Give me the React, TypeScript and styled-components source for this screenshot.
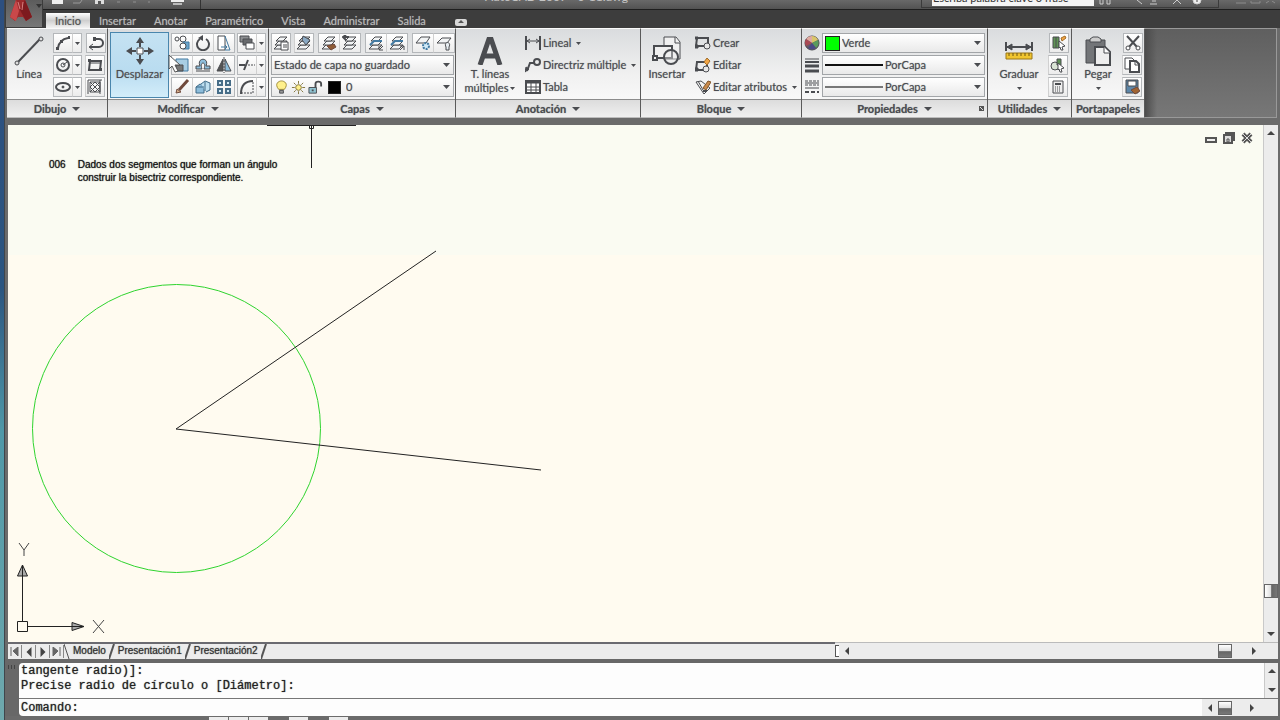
import React from "react";
import styled, { createGlobalStyle } from "styled-components";

const ink = "#4a4c50";
const uiFont = 'Lato, "Open Sans", "Noto Sans", sans-serif';

const GlobalStyle = createGlobalStyle`
  * { box-sizing: border-box; }
  body { margin: 0; background: #6a6a6a; font-family: ${uiFont}; font-size: 11px; color: ${ink}; overflow: hidden; }
  button, select, input { font: inherit; color: inherit; margin: 0; text-shadow: inherit; }
  svg { display: block; flex: none; }
`;

const Screen = styled.div`
  display: flex;
  height: 100vh;
  background: linear-gradient(#2d4f80, #2b5580 40%, #4f98a8 60%, #6fa9ad);
`;
const AppWindow = styled.div`
  flex: 1;
  min-width: 0;
  display: flex;
  flex-direction: column;
  margin-left: 4px;
  border-left: 1px solid #40464c;
  background: #6b6b6b;
  position: relative;
`;

/* ---------- title bar and tabs ---------- */
const TitleBar = styled.header`
  height: 10px;
  flex: none;
  display: flex;
  align-items: flex-end;
  overflow: hidden;
  padding-left: 46px;
  background: linear-gradient(#696969, #525252);
  border-bottom: 1px solid #1e1e1e;
`;
const QuickAccess = styled.div`
  display: flex;
  align-items: flex-end;
  width: 150px;
  height: 9px;
  border-right: 1px solid #333;
`;
const TitleText = styled.h1`
  flex: 1;
  margin: 0 0 5px;
  padding-left: 284px;
  font-size: 12px;
  line-height: 14px;
  font-weight: 400;
  color: #c4c4c4;
  white-space: nowrap;
`;
const SearchGroup = styled.div`
  display: flex;
  align-items: flex-end;
  width: 298px;
  height: 20px;
  margin-bottom: 1px;
  padding: 0 0 1px 10px;
  gap: 3px;
  border: 1px solid #3b3b3b;
`;
const SearchInput = styled.input`
  width: 162px;
  height: 18px;
  padding: 0 2px 0 1px;
  border: 0;
  border-radius: 0;
  background: #f4f4f4;
  line-height: 16px;
  &::placeholder { color: #333; opacity: 1; }
`;
const WindowGlyphs = styled.div`
  width: 61px;
  padding: 0 0 4px 17px;
`;
const TabBar = styled.nav`
  height: 18px;
  flex: none;
  display: flex;
  align-items: flex-end;
  padding-left: 41px;
  background: #3d3d3d;
`;
const Tab = styled.button<{ $active?: boolean }>`
  height: 15px;
  padding: 0 9px;
  border: 0;
  line-height: 14px;
  color: ${(p) => (p.$active ? "#555" : "#b9b9b9")};
  text-shadow: 0 0 1px #888;
  background: ${(p) => (p.$active ? "linear-gradient(#fff, #cfcfcf 50%, #f3f3f3)" : "transparent")};
`;
const TabToggle = styled.button`
  height: 12px;
  padding: 0 0 0 20px;
  border: 0;
  background: none;
`;
const AppMenu = styled.button`
  position: absolute;
  left: 0;
  top: 0;
  width: 38px;
  height: 28px;
  padding: 0 0 0 3px;
  display: flex;
  gap: 2px;
  border: 1px solid #3c3c3c;
  border-top: 0;
  background: linear-gradient(#5c5c5c, #777);
`;

/* ---------- ribbon ---------- */
const Ribbon = styled.div`
  flex: none;
  display: flex;
  height: 97px;
  padding-left: 2px;
  background: #6b6b6b;
  text-shadow: 0 0 1px #8a8c90;
`;
const RibbonRest = styled.div`
  flex: 1;
  height: 90px;
  margin-right: 3px;
  border: 1px solid #999;
  border-left: 0;
  background: linear-gradient(90deg, #4c4c4c, transparent 12px), linear-gradient(#5f5f5f, #777);
`;
const PanelBox = styled.section<{ $w: number }>`
  flex: none;
  width: ${(p) => p.$w}px;
  height: 90px;
  display: flex;
  flex-direction: column;
  border-top: 1px solid #fafafa;
  border-right: 1px solid #5a5a5a;
  border-bottom: 1px solid #bdbdbd;
  background: linear-gradient(#dadcde, #f0f0f0 50%, #fdfdfd);
`;
const PanelBody = styled.div<{ $left?: number; $gap?: number }>`
  flex: 1;
  display: flex;
  gap: ${(p) => p.$gap ?? 3}px;
  padding: 4px 0 0 ${(p) => p.$left ?? 2}px;
`;
const PanelTitle = styled.h2`
  position: relative;
  height: 18px;
  margin: 0;
  display: flex;
  align-items: center;
  justify-content: center;
  gap: 6px;
  border-top: 1px solid #8b8b8b;
  background: linear-gradient(#dcdcdc, #f0f0f0);
  font-size: 11px;
  line-height: 16px;
  font-weight: 700;
  white-space: nowrap;
`;
const Launcher = styled.span`
  position: absolute;
  right: 3px;
  top: 6px;
`;
const Rows = styled.div`
  display: flex;
  flex-direction: column;
  gap: 2px;
  flex: none;
`;
const Row = styled.div<{ $gap?: number }>`
  display: flex;
  align-items: center;
  height: 20px;
  gap: ${(p) => p.$gap ?? 0}px;
`;
const BigButton = styled.button<{ $w: number; $active?: boolean }>`
  flex: none;
  width: ${(p) => p.$w}px;
  height: 66px;
  margin-top: -1px;
  padding: 2px 0 0;
  display: flex;
  flex-direction: column;
  align-items: center;
  border: 1px solid ${(p) => (p.$active ? "#4a86ad" : "transparent")};
  background: ${(p) => (p.$active ? "linear-gradient(#c5e2f2, #b9dcf0 60%, #d3edfa)" : "none")};
  line-height: 14px;
  white-space: nowrap;
`;
const BigIcon = styled.span`
  height: 32px;
  display: flex;
  align-items: center;
`;
const BigLabel = styled.span`
  display: flex;
  align-items: center;
  gap: 2px;
  height: 14px;
`;
const IconButton = styled.button<{ $w?: number }>`
  width: ${(p) => p.$w ?? 20}px;
  height: 20px;
  flex: none;
  padding: 0;
  display: flex;
  align-items: center;
  justify-content: center;
  border: 1px solid #b4b7ba;
  background: linear-gradient(#fff, #ececec);
  & + & { border-left-color: #d0d0d0; margin-left: -1px; }
`;
const TextButton = styled.button`
  height: 20px;
  padding: 0;
  display: flex;
  align-items: center;
  gap: 2px;
  border: 0;
  background: none;
  line-height: 14px;
  white-space: nowrap;
`;
const CommandLabel = styled.span`
  padding: 0 3px 1px 0;
`;
const Combo = styled.label<{ $w: number }>`
  position: relative;
  width: ${(p) => p.$w}px;
  height: 20px;
  display: flex;
  align-items: center;
  gap: 2px;
  padding-left: 2px;
  border: 1px solid #a2a5a8;
  background: linear-gradient(#fff, #e9e9e9);
`;
const Select = styled.select`
  flex: 1;
  min-width: 0;
  height: 18px;
  padding: 0 0 2px;
  appearance: none;
  border: 0;
  background: transparent;
`;
const ComboArrow = styled.span`
  position: absolute;
  right: 3px;
  top: 7px;
  pointer-events: none;
`;
const Swatch = styled.span<{ $color: string; $size: number }>`
  width: ${(p) => p.$size}px;
  height: ${(p) => p.$size}px;
  flex: none;
  background: ${(p) => p.$color};
  border: 1px solid #222;
`;
const LineSample = styled.span<{ $color: string }>`
  width: 58px;
  height: 2px;
  flex: none;
  background: ${(p) => p.$color};
`;

/* ---------- drawing area ---------- */
const DrawingRow = styled.main`
  flex: 1;
  min-height: 0;
  display: flex;
  margin: 0 2px 0 3px;
`;
const Canvas = styled.div`
  position: relative;
  flex: 1;
  min-width: 0;
  overflow: hidden;
  background: linear-gradient(#fafbf2 130px, #fffbf0 130px);
`;
const Note = styled.p`
  position: absolute;
  left: 41px;
  top: 33px;
  margin: 0;
  display: flex;
  gap: 12px;
  font-family: "Liberation Sans", Arial, sans-serif;
  font-size: 10px;
  line-height: 13px;
  color: #111;
  text-shadow: 0 0 1px #444;
`;
const DocButtons = styled.div`
  position: absolute;
  right: 9px;
  top: 7px;
  display: flex;
  gap: 4px;
`;
const GlyphButton = styled.button`
  width: 14px;
  height: 12px;
  padding: 0;
  border: 0;
  background: none;
`;
const VScroll = styled.div<{ $w: number }>`
  width: ${(p) => p.$w}px;
  flex: none;
  display: flex;
  flex-direction: column;
  align-items: center;
  justify-content: space-between;
  padding: 4px 0;
  border-left: 1px solid #c9c9c9;
  background: #ececec;
`;
const Spacer = styled.span<{ $w?: number }>`
  flex: ${(p) => (p.$w ? `0 0 ${p.$w}px` : "1")};
`;
const Thumb = styled.span<{ $vertical?: boolean }>`
  width: 14px;
  height: 14px;
  flex: none;
  border: 1px solid #666;
  background: linear-gradient(${(p) => (p.$vertical ? "90deg" : "180deg")}, #fff, #ddd 50%, #666 55%, #777);
`;
const ThumbGap = styled.span`
  height: 32px;
`;
const LayoutBar = styled.div`
  flex: none;
  display: flex;
  align-items: stretch;
  height: 17px;
  margin: 0 2px 0 3px;
  background: #ececec;
`;
const LayoutTabs = styled.div`
  width: 827px;
  display: flex;
  align-items: center;
  border-top: 2px solid #6a6a70;
`;
const NavButton = styled.button`
  width: 14px;
  height: 13px;
  padding: 0;
  display: flex;
  align-items: center;
  justify-content: center;
  border: 0;
  border-right: 1px solid #888;
  background: none;
`;
const LayoutTab = styled.button`
  height: 15px;
  padding: 0 3px 1px;
  border: 0;
  background: none;
  font-family: "Liberation Sans", Arial, sans-serif;
  font-size: 10px;
  line-height: 14px;
  color: #333;
  text-shadow: 0 0 1px #555;
`;
const HScroll = styled.div`
  flex: 1;
  display: flex;
  align-items: center;
  padding-right: 20px;
  border-top: 1px solid #bbb;
`;
const SplitHandle = styled.span`
  width: 4px;
  height: 12px;
  margin-right: 4px;
  border: 1px solid #555;
  border-right: 0;
  background: #fff;
`;

/* ---------- command window ---------- */
const CommandDock = styled.section`
  flex: none;
  height: 57px;
  display: flex;
  padding: 4px 2px 0 14px;
  position: relative;
  background: #686868;
`;
const Grip = styled.span`
  position: absolute;
  left: 3px;
  top: 6px;
  width: 9px;
  height: 4px;
  background: repeating-linear-gradient(90deg, #444 0 1px, transparent 1px 3px);
`;
const CommandArea = styled.div`
  flex: 1;
  display: flex;
  flex-direction: column;
  border-radius: 4px 0 0 4px;
  overflow: hidden;
  background: #fdfdfd;
  font-family: "Liberation Mono", "Courier New", monospace;
  font-size: 12px;
  line-height: 15px;
  color: #222;
  text-shadow: 0 0 1px #555;
`;
const History = styled.div`
  height: 36px;
  flex: none;
  display: flex;
  border-bottom: 1px solid #777;
`;
const HistoryText = styled.div`
  flex: 1;
  padding: 1px 0 0 2px;
  white-space: pre;
`;
const Prompt = styled.label`
  flex: 1;
  display: flex;
  align-items: center;
`;
const PromptText = styled.span`
  padding: 2px 0 0 2px;
`;
const PromptInput = styled.input`
  flex: 1;
  height: 15px;
  border: 0;
  padding: 0 4px;
  outline: 0;
  background: transparent;
`;
const PromptScroll = styled.span`
  align-self: stretch;
  width: 76px;
  display: flex;
  align-items: center;
  gap: 4px;
  padding-left: 4px;
  background: #ececec;
`;
const StatusBar = styled.footer`
  height: 4px;
  flex: none;
  display: flex;
  gap: 1px;
  align-items: flex-end;
  padding-left: 204px;
  background: #6b6b6b;
`;
const StatusToggle = styled.button<{ $on: boolean }>`
  width: 19px;
  height: 3px;
  padding: 0;
  border: 0;
  background: ${(p) => (p.$on ? "#ececec" : "transparent")};
`;

/* ---------- icons ---------- */
const Caret = ({ w = 7 }: { w?: number }) => (
  <svg width={w} height={w > 6 ? 4 : 3} viewBox="0 0 8 4" preserveAspectRatio="none" aria-hidden="true">
    <path d="M0 0h8L4 4z" fill={ink} />
  </svg>
);
const Arrow = ({ dir, size = 8 }: { dir: "up" | "down" | "left" | "right"; size?: number }) => (
  <svg width={size} height={size} viewBox="0 0 8 8" aria-hidden="true">
    <path fill="#444" d={{ up: "M0 6h8L4 2z", down: "M0 2h8L4 6z", left: "M6 0v8L2 4z", right: "M2 0v8l4-4z" }[dir]} />
  </svg>
);

const sheets = (
  <g fill="#f2f4f5" stroke={ink}>
    <path d="M1 14l4-4h9l-4 4z" />
    <path d="M2 10l4-4h8l-4 4z" />
    <path d="M3 6l4-4h7l-4 4z" />
  </g>
);
const art: Record<string, React.ReactNode> = {
  arc: <><path d="M3 13C4 7 7 4 13 3" strokeWidth="2" /><path d="M1 12h3v3H1zM5 5h3v3H5zM13 1h2v3h-2z" fill={ink} stroke="none" /></>,
  hook: <><path d="M7 4h4a4 4 0 0 1 0 8H2" strokeWidth="2" /><path d="M5 9L1 12l4 3" /><path d="M5 2h3v4H5z" fill={ink} stroke="none" /></>,
  circle: <><circle cx="8" cy="8" r="6" strokeWidth="2" /><circle cx="8" cy="8" r="2" /><path d="M8 8l4-3" /></>,
  rect: <><path d="M3 4h11l-1 9H2z" strokeWidth="2" /><path d="M1 2h3v3H1zM12 11h3v3h-3z" fill={ink} stroke="none" /><path d="M3 6h11" /></>,
  ellipse: <><ellipse cx="8" cy="8" rx="7" ry="4" strokeWidth="2" /><circle cx="8" cy="8" r="1" fill={ink} /></>,
  hatch: <><path d="M3 3h10v10H3zM3 8l5-5M3 13L13 3M8 13l5-5M3 3l10 10M8 3l5 5M3 8l5 5" /><path d="M1 1v14M1 1h14M13 1v14" /></>,
  copy: <><circle cx="3" cy="4" r="2" /><circle cx="9" cy="4" r="3" /><path d="M9 7h6v7H9z" fill="#6aa5cc" stroke="#427aa2" /><circle cx="9" cy="11" r="3" fill="#fff" /></>,
  rotate: <><path d="M5 4a6 6 0 1 0 6 0" strokeWidth="2" /><path d="M8 0v6L3 3z" fill={ink} stroke="none" /></>,
  stretch: <><path d="M2 1h7v14H2z" fill="#fff" /><path d="M9 1l5 14H9M5 12h6M9 10l2 2-2 2" stroke="#427aa2" /></>,
  front: <><path d="M1 1h9v6H1z" fill="#8b8d90" /><path d="M4 4h9v6H4z" fill="#696b6e" /><path d="M7 8h8v6H7z" fill="#fff" /></>,
  scale: <><path d="M2 2h12v12H2z" fill="#a9cee4" stroke="#427aa2" /><path d="M2 8h7v6H2z" fill="#777" /></>,
  offset: <><path d="M1 12V9h4C1 0 15 0 11 9h4v3H9c3-8-5-8-2 0z" fill="#8dbddb" /><path d="M1 14h14" /></>,
  mirror: <><path d="M7 2v12H1z" fill="#555" /><path d="M9 2v12h6z" fill="#8dbddb" /><path d="M8 0v16" strokeDasharray="2 1" /></>,
  trim: <><path d="M0 8h6M9 3L5 13" strokeWidth="2" /><path d="M9 8h7" strokeDasharray="2 1" /></>,
  erase: <><path d="M14 1L5 11" stroke="#704a3c" strokeWidth="3" /><path d="M2 14l1-4 4 3z" fill="#d8b08c" stroke="#704a3c" /></>,
  explode: <><path d="M1 8l4-3 4 2v7H1z" fill="#8dbddb" stroke="#3e6b88" /><path d="M6 5l4-3 5 2v7l-4 2" fill="#bfe0f1" stroke="#3e6b88" /><path d="M1 8h8M10 3v9" stroke="#3e6b88" /></>,
  array: <path d="M2 2h4v4H2zM10 2h4v4h-4zM2 10h4v4H2zM10 10h4v4h-4z" fill="#d4ebf7" stroke="#476d88" strokeWidth="2" />,
  fillet: <><path d="M2 15C2 6 6 2 14 2" strokeWidth="2" /><path d="M2 14h12V2" strokeDasharray="2 1" /></>,
  layers: <>{sheets}<path d="M8 7h7v8H8z" fill="#fff" /><path d="M10 10h4M10 12h4" /></>,
  layersState: <>{sheets}<path d="M7 1l7 4-4 5-4-5z" fill="#8aa9c4" /></>,
  layersMatch: <>{sheets}<path d="M6 11l7-2 2 3-5 3z" fill="#8f5b36" stroke="#704a3c" /></>,
  layersPrev: <>{sheets}<path d="M7 2H1M4 0L1 2l3 3" strokeWidth="2" /></>,
  layersIso: <>{sheets}<path d="M2 10l4-4h8" stroke="#427aa2" strokeWidth="2" /><path d="M15 11l-4 4M11 11v4h4" /></>,
  layersUn: <>{sheets}<path d="M2 10l4-4h8" stroke="#427aa2" strokeWidth="2" /><path d="M11 15l4-4M11 11h4v4" /></>,
  layersFreeze: <><path d="M1 8l5-6h9l-4 6z" fill="#f2f4f5" /><circle cx="11" cy="11" r="3" fill="#cfe9f7" stroke="#427aa2" strokeWidth="2" strokeDasharray="2 1" /></>,
  layersOff: <><path d="M1 8l5-5h9l-4 5z" fill="#f2f4f5" /><path d="M10 12c-3-6 6-6 3 0v3h-3z" fill="#e8eef2" /></>,
  bulb: <><path d="M5 10C0 4 5 1 8 1s8 3 3 9z" fill="#fff08c" stroke="#9d8a35" /><path d="M6 11h4v3H6z" fill="#999" /></>,
  sun: <><circle cx="8" cy="8" r="3" fill="#fff08c" stroke="#807238" /><path d="M8 1v3M8 12v3M1 8h3M12 8h3M3 3l2 2M11 11l2 2M13 3l-2 2M5 11l-2 2" stroke="#807238" /></>,
  lock: <><path d="M1 8h8v6H1z" fill="#8fc3d1" /><path d="M8 8V4c0-3 6-3 6 0v3M5 10v2" strokeWidth="2" /></>,
  lineal: <><path d="M1 1v14M15 1v14" strokeWidth="2" /><path d="M2 6h12M5 4L2 6l3 2M11 4l3 2-3 2" /></>,
  leader: <><path d="M2 14L5 6h4" strokeWidth="2" /><path d="M0 15l1-5 3 2z" fill={ink} /><circle cx="12" cy="5" r="3" strokeWidth="2" /></>,
  table: <><path d="M1 2h14v12H1z" fill="#fff" strokeWidth="2" /><path d="M1 3h14" strokeWidth="3" /><path d="M1 8h14M1 11h14M6 4v10M11 4v10" /></>,
  create: <><path d="M2 3h11v8H1z" strokeWidth="2" /><circle cx="12" cy="11" r="3" fill="#e7e7e7" /><path d="M0 10h3v3H0zM0 2h3v2H0z" fill={ink} /></>,
  edit: <><path d="M2 5h10v8H1z" strokeWidth="2" /><circle cx="11" cy="12" r="3" fill="#e7e7e7" /><path d="M9 5l3-4 3 3-3 4z" fill="#f2a545" stroke="#a16d28" /><path d="M0 11h3v3H0z" fill={ink} /></>,
  attrs: <><path d="M1 3l5-1 9 7-6 6zM3 2l5 9" /><path d="M8 9l5-7 3 1-5 8z" fill="#c98a4c" stroke="#80562a" /><path d="M8 12h4" strokeWidth="2" /></>,
  sphere: <><circle cx="8" cy="8" r="7" fill="#6b5a66" /><path d="M8 8L2 4a7 7 0 0 1 6-3z" fill="#dfaaa0" stroke="none" /><path d="M8 8V1a7 7 0 0 1 6 4z" fill="#d9c56a" stroke="none" /><path d="M8 8l6-3a7 7 0 0 1-2 8z" fill="#5a9a5d" stroke="none" /><path d="M8 8l-6 3a7 7 0 0 1 0-7z" fill="#a94a55" stroke="none" /><path d="M8 8l4 5a7 7 0 0 1-8 0z" fill="#4b4a86" stroke="none" /></>,
  weights: <><path d="M1 2h14" /><path d="M1 5h14" strokeWidth="2" /><path d="M1 9h14M1 14h14" strokeWidth="3" /></>,
  types: <><path d="M1 2h14M1 6h14" strokeDasharray="3 1" /><path d="M1 4h14M1 9h14" /><path d="M1 13h14" strokeDasharray="4 2" strokeWidth="2" /></>,
  quick: <><path d="M2 2h6v11H2z" fill="#5f9355" /><path d="M5 2v11" /><path d="M10 3l4-2 1 2-4 3z" fill="#f2a545" stroke="#a16d28" /><path d="M8 6l6 5-3 1 1 3-2 0-1-3-1 1z" fill="#fff" /></>,
  selectAll: <><circle cx="5" cy="9" r="4" fill="#d9e4d5" /><path d="M7 2h4v6H7z" fill="#5f9355" /><path d="M8 6l6 5-3 1 1 3-2 0-1-3-1 1z" fill="#fff" /></>,
  calc: <><path d="M3 2h10v12H3z" fill="#eee" /><path d="M5 5h6" strokeWidth="2" /><path d="M5 8h6M5 10h6M5 12h6" strokeDasharray="1 1" /></>,
  cut: <><path d="M2 1l10 11M14 1L4 12" strokeWidth="2" /><circle cx="3" cy="13" r="2" fill="#fff" /><circle cx="13" cy="13" r="2" fill="#fff" /></>,
  copyClip: <><path d="M1 1h7l2 2v9H1z" fill="#fff" /><path d="M6 4h6l3 3v8H6z" fill="#fff" strokeWidth="2" /><path d="M11 4v4h4" /></>,
  match: <><path d="M2 1h12v13H2z" fill="#5c86a8" /><path d="M4 2h8v5H4z" fill="#fff" /><path d="M7 11l6-3 3 4-5 3z" fill="#a06432" stroke="#704a3c" /></>,
};
const Icon = ({ name, size = 16 }: { name: string; size?: number }) => (
  <svg width={size} height={size} viewBox="0 0 16 16" fill="none" stroke={ink} aria-hidden="true">
    {art[name]}
  </svg>
);

const PointerMark = styled.svg`
  position: absolute;
  left: 163px;
  top: 54px;
  pointer-events: none;
`;

const Tool = ({ name, label, w }: { name: string; label: string; w?: number }) => (
  <IconButton $w={w} aria-label={label}><Icon name={name} /></IconButton>
);
const SplitTool = ({ name, label }: { name: string; label: string }) => (
  <Row>
    <Tool name={name} label={label} />
    <IconButton $w={10} aria-label={label + ": opciones"}><Caret w={5} /></IconButton>
  </Row>
);
const Command = ({ name, label, menu }: { name: string; label: string; menu?: boolean }) => (
  <TextButton>
    <Icon name={name} size={16} />
    <CommandLabel>{label}</CommandLabel>
    {menu && <Caret w={5} />}
  </TextButton>
);
const Panel = (p: { title: string; w: number; left?: number; gap?: number; plain?: boolean; launcher?: boolean; children: React.ReactNode }) => (
  <PanelBox $w={p.w}>
    <PanelBody $left={p.left} $gap={p.gap}>{p.children}</PanelBody>
    <PanelTitle>
      {p.title}
      {!p.plain && <Caret w={8} />}
      {p.launcher && (
        <Launcher><svg width="5" height="5" viewBox="0 0 5 5"><path d="M0 0h5v5H0z" fill="#555" /><path d="M1 1l3 3" stroke="#ddd" /></svg></Launcher>
      )}
    </PanelTitle>
  </PanelBox>
);

const tabs = ["Inicio", "Insertar", "Anotar", "Paramétrico", "Vista", "Administrar", "Salida"];
const statusToggles = [true, true, true, false, true, false, true];

export default function App() {
  return (
    <>
      <GlobalStyle />
      <Screen>
        <AppWindow>
          <TitleBar>
            <QuickAccess>
              <svg width="148" height="9" viewBox="0 0 148 9" aria-hidden="true">
                <path d="M1 0h11v4H1z" fill="#eee" />
                <path d="M22 3h7l2-3" stroke="#999" fill="none" />
                <path d="M44 0h9v4h-9z" fill="#ddd" />
                <path d="M47 1h3v3h-3z" fill="#555" />
                <path d="M66 2h3M82 2h3M97 2h2" stroke="#909090" />
                <path d="M120 0h13v2h-13z" fill="#eee" />
                <path d="M122 3h9v2h-9z" fill="#bbb" />
              </svg>
            </QuickAccess>
            <TitleText>AutoCAD 2009 - 0-11.dwg</TitleText>
            <SearchGroup>
              <SearchInput aria-label="Buscar" placeholder="Escriba palabra clave o frase" />
              <svg width="112" height="6" viewBox="0 0 112 6" fill="none" stroke="#ccc" aria-hidden="true">
                <path d="M3 0v4h3V0M10 0v4h3V0M40 0l5 4M53 4h7M55 1h4M76 4l4-4 4 4" />
                <circle cx="100" cy="0" r="4" fill="#eee" />
                <path d="M100 0v2" stroke="#444" />
              </svg>
            </SearchGroup>
            <WindowGlyphs>
              <svg width="40" height="4" viewBox="0 0 40 4" stroke="#8c8c8c" fill="none" aria-hidden="true"><path d="M0 2h10M15 0v2h9V0M30 2l3-2M39 2l-3-2" /></svg>
            </WindowGlyphs>
          </TitleBar>
          <TabBar>
            {tabs.map((t, i) => <Tab key={t} $active={i === 0}>{t}</Tab>)}
            <TabToggle aria-label="Minimizar cinta de opciones">
              <svg width="12" height="7" viewBox="0 0 12 7"><rect width="12" height="7" rx="2" fill="#d8d8d8" /><path d="M3 4l3-3 3 3zM4 5h4" fill="#555" /></svg>
            </TabToggle>
          </TabBar>
          <AppMenu aria-label="Menú de la aplicación">
            <svg width="24" height="22" viewBox="0 0 24 22">
              <path d="M1 17L7 0h9l7 17-6 4-3-4h-5l-3 4z" fill="#9c2a2c" />
              <path d="M7 0l3 11-3 10-6-4z" fill="#c9484a" />
              <path d="M16 0l-5 10 6 11 6-4z" fill="#7d1a1e" />
              <path d="M9 2l2 7M14 2l-1 8" stroke="#d98080" />
            </svg>
            <svg width="7" height="10" viewBox="0 0 7 10"><path d="M1 4h6L4 8z" fill="#333" /></svg>
          </AppMenu>

          <Ribbon>
            <Panel title="Dibujo" w={101} gap={4}>
              <BigButton $w={40}>
                <BigIcon>
                  <svg width="30" height="30" viewBox="0 0 30 30" stroke={ink} fill="#ddd"><path d="M4 26L26 3" strokeWidth="2" /><circle cx="3" cy="27" r="2" /><circle cx="27" cy="3" r="2" /></svg>
                </BigIcon>
                <BigLabel>Línea</BigLabel>
              </BigButton>
              <Rows>
                <SplitTool name="arc" label="Arco" />
                <SplitTool name="circle" label="Círculo" />
                <SplitTool name="ellipse" label="Elipse" />
              </Rows>
              <Rows>
                <Tool name="hook" label="Polilínea" />
                <Tool name="rect" label="Rectángulo" />
                <Tool name="hatch" label="Sombreado" />
              </Rows>
            </Panel>

            <Panel title="Modificar" w={161} gap={2}>
              <BigButton $w={59} $active>
                <BigIcon>
                  <svg width="28" height="28" viewBox="0 0 28 28" fill={ink}>
                    <path d="M14 0l4 6h-3v4h-2V6h-3zM14 28l4-6h-3v-4h-2v4h-3zM0 14l6-4v3h4v2H6v3zM28 14l-6-4v3h-4v2h4v3z" />
                    <path d="M11 11h6v6h-6z" fill="#fff" stroke={ink} />
                  </svg>
                </BigIcon>
                <BigLabel>Desplazar</BigLabel>
              </BigButton>
              <Rows>
                <Row><Tool w={22} name="copy" label="Copiar" /><Tool w={22} name="rotate" label="Girar" /><Tool w={22} name="stretch" label="Estirar" /></Row>
                <Row><Tool w={22} name="scale" label="Escala" /><Tool w={22} name="offset" label="Desfase" /><Tool w={22} name="mirror" label="Simetría" /></Row>
                <Row><Tool w={22} name="erase" label="Borrar" /><Tool w={22} name="explode" label="Descomponer" /><Tool w={22} name="array" label="Matriz" /></Row>
              </Rows>
              <Rows>
                <SplitTool name="front" label="Traer al frente" />
                <SplitTool name="trim" label="Recortar" />
                <SplitTool name="fillet" label="Empalme" />
              </Rows>
            </Panel>

            <Panel title="Capas" w={187}>
              <Rows>
                <Row $gap={4}>
                  <Tool name="layers" label="Propiedades de capas" />
                  <Tool name="layersState" label="Establecer actual" />
                  <Row><Tool w={22} name="layersMatch" label="Igualar" /><Tool w={22} name="layersPrev" label="Previa" /></Row>
                  <Row><Tool w={22} name="layersIso" label="Aislar" /><Tool w={22} name="layersUn" label="Desaislar" /></Row>
                  <Row><Tool w={22} name="layersFreeze" label="Inutilizar" /><Tool w={22} name="layersOff" label="Desactivar" /></Row>
                </Row>
                <Combo $w={183}>
                  <Select aria-label="Estado de capa"><option>Estado de capa no guardado</option></Select>
                  <ComboArrow><Caret /></ComboArrow>
                </Combo>
                <Combo $w={183}>
                  <Icon name="bulb" size={15} /><Icon name="sun" size={15} /><Icon name="lock" size={15} />
                  <Spacer $w={1} />
                  <Swatch $color="#000" $size={13} />
                  <Spacer $w={1} />
                  <Select aria-label="Capa"><option>0</option></Select>
                  <ComboArrow><Caret /></ComboArrow>
                </Combo>
              </Rows>
            </Panel>

            <Panel title="Anotación" w={185}>
              <BigButton $w={64}>
                <BigIcon>
                  <svg width="26" height="28" viewBox="0 0 26 28" fill="none" stroke={ink} strokeWidth="5"><path d="M3 28L12 2h2l9 26M6 19h14" /></svg>
                </BigIcon>
                <BigLabel>T. líneas</BigLabel>
                <BigLabel>múltiples <Caret w={5} /></BigLabel>
              </BigButton>
              <Rows>
                <Command name="lineal" label="Lineal" menu />
                <Command name="leader" label="Directriz múltiple" menu />
                <Command name="table" label="Tabla" />
              </Rows>
            </Panel>

            <Panel title="Bloque" w={161} gap={4}>
              <BigButton $w={48}>
                <BigIcon>
                  <svg width="30" height="30" viewBox="0 0 30 30" fill="#f0f0f0" stroke={ink} strokeWidth="2">
                    <path d="M12 1h12l4 5v17H12z" strokeWidth="1" /><path d="M23 1v6h5" strokeWidth="1" /><path d="M2 10h18v12H2z" /><circle cx="19" cy="21" r="7" fillOpacity="0.4" /><path d="M1 20h4v4H1z" />
                  </svg>
                </BigIcon>
                <BigLabel>Insertar</BigLabel>
              </BigButton>
              <Rows>
                <Command name="create" label="Crear" />
                <Command name="edit" label="Editar" />
                <Command name="attrs" label="Editar atributos" menu />
              </Rows>
            </Panel>

            <Panel title="Propiedades" w={186} launcher>
              <Rows>
                <Row $gap={2}>
                  <Icon name="sphere" />
                  <Combo $w={163}>
                    <Swatch $color="#0f0" $size={15} />
                    <Select aria-label="Color"><option>Verde</option></Select>
                    <ComboArrow><Caret /></ComboArrow>
                  </Combo>
                </Row>
                <Row $gap={2}>
                  <Icon name="weights" />
                  <Combo $w={163}>
                    <LineSample $color="#111" />
                    <Select aria-label="Grosor de línea"><option>PorCapa</option></Select>
                    <ComboArrow><Caret /></ComboArrow>
                  </Combo>
                </Row>
                <Row $gap={2}>
                  <Icon name="types" />
                  <Combo $w={163}>
                    <LineSample $color="#777" />
                    <Select aria-label="Tipo de línea"><option>PorCapa</option></Select>
                    <ComboArrow><Caret /></ComboArrow>
                  </Combo>
                </Row>
              </Rows>
            </Panel>

            <Panel title="Utilidades" w={84} gap={1}>
              <BigButton $w={58}>
                <BigIcon>
                  <svg width="28" height="20" viewBox="0 0 28 20" stroke={ink} fill={ink}>
                    <path d="M1 1v9M27 1v9M2 6h24" strokeWidth="2" /><path d="M2 6l5-3v6zM26 6l-5-3v6z" />
                    <path d="M1 12h26v6H1z" fill="#f0c530" stroke="#9a7618" /><path d="M4 12v3M8 12v3M12 12v3M16 12v3M20 12v3M24 12v3" stroke="#6d5415" />
                  </svg>
                </BigIcon>
                <BigLabel>Graduar</BigLabel>
                <BigLabel><Caret w={5} /></BigLabel>
              </BigButton>
              <Rows>
                <Tool name="quick" label="Selección rápida" />
                <Tool name="selectAll" label="Seleccionar todo" />
                <Tool name="calc" label="Calculadora" />
              </Rows>
            </Panel>

            <Panel title="Portapapeles" w={73} plain gap={1}>
              <BigButton $w={48}>
                <BigIcon>
                  <svg width="26" height="30" viewBox="0 0 26 30" stroke={ink}>
                    <path d="M1 4h19v23H1z" fill="#737578" /><path d="M5 6V3l3-2h5l3 2v3z" fill="#ccc" />
                    <path d="M10 11h10l5 5v13H10z" fill="#eee" strokeWidth="2" /><path d="M19 11v6h6" fill="#fff" />
                  </svg>
                </BigIcon>
                <BigLabel>Pegar</BigLabel>
                <BigLabel><Caret w={5} /></BigLabel>
              </BigButton>
              <Rows>
                <Tool name="cut" label="Cortar" />
                <Tool name="copyClip" label="Copiar clip" />
                <Tool name="match" label="Igualar propiedades" />
              </Rows>
            </Panel>
            <RibbonRest />
          </Ribbon>

          <DrawingRow>
            <Canvas>
              <svg width="600" height="517" viewBox="0 0 600 517" fill="none" stroke="#222" role="img" aria-label="Dibujo">
                <path d="M259 0h89" strokeWidth="2" />
                <path d="M303.500 0v43M301.500 0v3.500h4V0" />
                <circle cx="168.500" cy="303.500" r="144" stroke="#2fd42f" />
                <path d="M428 126L168 304l365 41" />
                <path d="M14.500 496V450M20 501.500h52" />
                <path d="M9.500 496.500h10v10h-10z" />
                <path d="M14.500 440l5 11h-10zM14.500 440v11M76 501.500l-12-4v8zM64 501.500h12" fill="#aaa" />
                <path d="M11 418l5 7 5-7M16 425v6M85 495l11 13M96 495l-11 13" stroke="#444" />
              </svg>
              <Note>
                <span>006</span>
                <span>Dados dos segmentos que forman un ángulo<br />construir la bisectriz correspondiente.</span>
              </Note>
              <DocButtons>
                <GlyphButton aria-label="Minimizar"><svg width="14" height="12" viewBox="0 0 14 12"><path d="M2 6h10v4H2z" fill="#eee" stroke="#555" strokeWidth="2" /></svg></GlyphButton>
                <GlyphButton aria-label="Restaurar"><svg width="14" height="12" viewBox="0 0 14 12" fill="#ddd" stroke="#555"><path d="M4 1h8v7H4z" strokeWidth="2" /><path d="M2 3h8v8H2z" strokeWidth="2" /><path d="M5 7h2v3H5z" /></svg></GlyphButton>
                <GlyphButton aria-label="Cerrar"><svg width="14" height="12" viewBox="0 0 14 12"><path d="M3 2l8 8M11 2l-8 8" stroke="#555" strokeWidth="4" /><path d="M3 2l8 8M11 2l-8 8" stroke="#ddd" /></svg></GlyphButton>
              </DocButtons>
            </Canvas>
            <VScroll $w={15}>
              <Arrow dir="up" />
              <Spacer />
              <Thumb $vertical />
              <ThumbGap />
              <Arrow dir="down" />
            </VScroll>
          </DrawingRow>

          <LayoutBar>
            <LayoutTabs>
              <NavButton aria-label="Primera"><svg width="9" height="9" viewBox="0 0 9 9"><path d="M1 0v9M8 0v9L3 4z" fill="#666" stroke="#666" /></svg></NavButton>
              <NavButton aria-label="Anterior"><Arrow dir="left" size={10} /></NavButton>
              <NavButton aria-label="Siguiente"><Arrow dir="right" size={10} /></NavButton>
              <NavButton aria-label="Última"><svg width="9" height="9" viewBox="0 0 9 9"><path d="M8 0v9M1 0v9l5-5z" fill="#666" stroke="#666" /></svg></NavButton>
              <svg width="6" height="15" viewBox="0 0 6 15" stroke="#555"><path d="M0 0l5 15" /></svg>
              <LayoutTab>Modelo</LayoutTab>
              <svg width="6" height="15" viewBox="0 0 6 15" stroke="#555" strokeWidth="2"><path d="M5 0L0 15" /></svg>
              <LayoutTab>Presentación1</LayoutTab>
              <svg width="6" height="15" viewBox="0 0 6 15" stroke="#555" strokeWidth="2"><path d="M5 0L0 15" /></svg>
              <LayoutTab>Presentación2</LayoutTab>
              <svg width="6" height="15" viewBox="0 0 6 15" stroke="#555" strokeWidth="2"><path d="M5 0L0 15" /></svg>
            </LayoutTabs>
            <HScroll>
              <SplitHandle />
              <Arrow dir="left" />
              <Spacer />
              <Thumb />
              <Spacer $w={18} />
              <Arrow dir="right" />
            </HScroll>
          </LayoutBar>

          <CommandDock>
            <Grip />
            <CommandArea>
              <History>
                <HistoryText>{"tangente radio)]:\nPrecise radio de círculo o [Diámetro]:"}</HistoryText>
                <VScroll $w={14}><Arrow dir="up" /><Arrow dir="down" /></VScroll>
              </History>
              <Prompt>
                <PromptText>Comando:</PromptText>
                <PromptInput type="text" />
                <PromptScroll><Arrow dir="left" /><Thumb /><Spacer $w={8} /><Arrow dir="right" /></PromptScroll>
              </Prompt>
            </CommandArea>
          </CommandDock>
          <StatusBar>
            {statusToggles.map((on, i) => <StatusToggle key={i} $on={on} aria-label={"Modo " + (i + 1)} />)}
          </StatusBar>
          <PointerMark width="14" height="20" viewBox="0 0 14 20" aria-hidden="true">
            <path d="M1 1v14l3-3 3 6 3-1-3-6h5z" fill="#fff" stroke="#555" />
          </PointerMark>
        </AppWindow>
      </Screen>
    </>
  );
}
